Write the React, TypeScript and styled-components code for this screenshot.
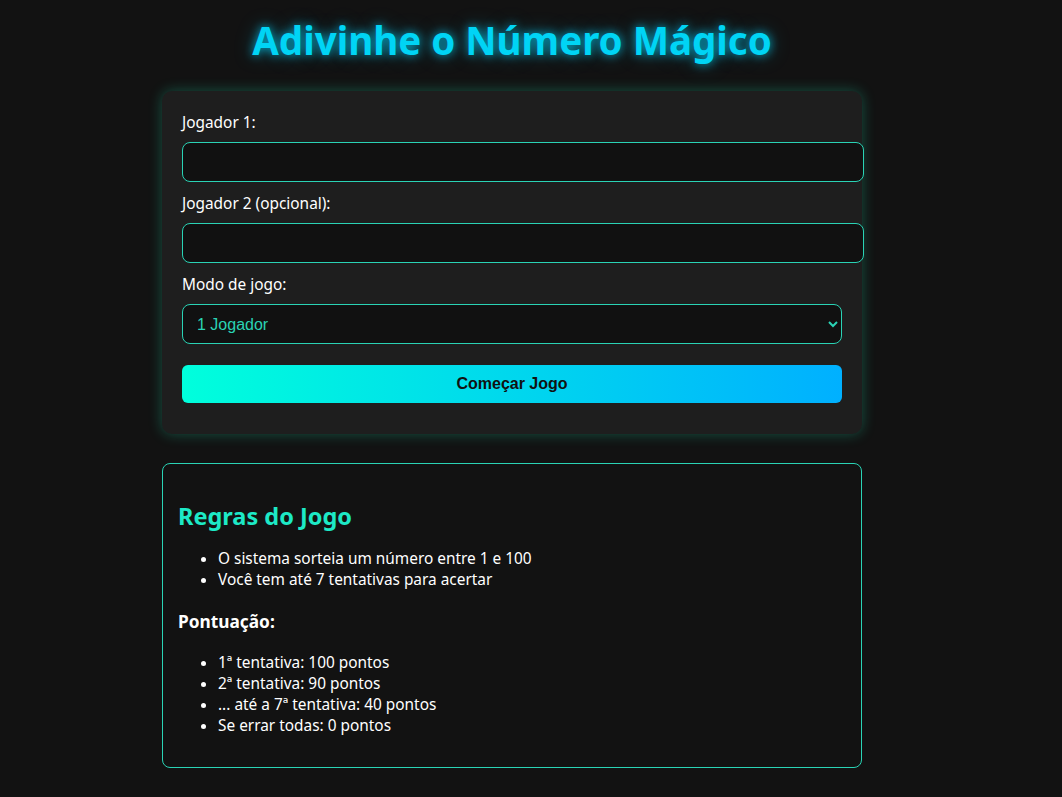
import React from "react";
import styled, { createGlobalStyle } from "styled-components";

const Global = createGlobalStyle`
  html, body {
    margin: 0;
    padding: 0;
    background: #121212;
  }
  body {
    font-family: "Noto Sans", "Open Sans", sans-serif;
    color: #ffffff;
  }
`;

const Page = styled.div`
  padding: 16px 38px 30px 0;
  display: flex;
  flex-direction: column;
  align-items: center;
`;

const Title = styled.h1`
  margin: 0 0 27px;
  font-size: 38.5px;
  line-height: 48px;
  font-weight: 700;
  color: #00d4f5;
  text-shadow: 0 0 10px rgba(0, 212, 255, 0.75), 0 0 20px rgba(0, 212, 255, 0.35);
`;

const Card = styled.div`
  width: 700px;
  box-sizing: border-box;
  padding: 21px 20px 31px;
  background: #1e1e1e;
  border-radius: 10px;
  box-shadow: 0 0 14px rgba(29, 233, 182, 0.3);
`;

const Label = styled.label`
  display: block;
  font-size: 15.4px;
  line-height: 22px;
  margin-bottom: 8px;
`;

const TextInput = styled.input`
  display: block;
  width: 100%;
  padding: 10px;
  height: 18px;
  margin: 0 0 11px;
  background: #111111;
  border: 1px solid #2ad3b5;
  border-radius: 8px;
  color: #2ad3b5;
  font-size: 16px;
  outline: none;
`;

const Select = styled.select`
  display: block;
  width: 100%;
  height: 40px;
  box-sizing: border-box;
  padding: 0 10px;
  margin: 0 0 21px;
  background: #111111;
  border: 1px solid #2ad3b5;
  border-radius: 8px;
  color: #2ad3b5;
  font-family: "Liberation Sans", Arial, sans-serif;
  font-size: 16px;
  outline: none;
`;

const StartButton = styled.button`
  display: block;
  width: 100%;
  height: 38px;
  border: none;
  border-radius: 6px;
  background: linear-gradient(90deg, #00ffdc 0%, #00b0ff 100%);
  color: #111111;
  font-family: "Liberation Sans", Arial, sans-serif;
  font-size: 16px;
  font-weight: 700;
  cursor: pointer;
`;

const Rules = styled.div`
  width: 700px;
  box-sizing: border-box;
  margin-top: 29px;
  padding: 15px;
  border: 1px solid #2ad3b5;
  border-radius: 8px;
  background: #121212;
`;

const RulesTitle = styled.h2`
  margin: 21px 0 16px;
  font-size: 23.5px;
  line-height: 32px;
  font-weight: 700;
  color: #1de9c6;
`;

const SubTitle = styled.h3`
  margin: 20px 0 18px;
  font-size: 17.3px;
  line-height: 24px;
  font-weight: 700;
  color: #ffffff;
`;

const List = styled.ul`
  margin: 0;
  padding-left: 40px;
  font-size: 15.4px;
  line-height: 21px;
`;

const LastList = styled(List)`
  margin-bottom: 16px;
`;

export default function App() {
  return (
    <>
      <Global />
      <Page>
        <Title>Adivinhe o Número Mágico</Title>
        <Card>
          <Label htmlFor="p1">Jogador 1:</Label>
          <TextInput id="p1" type="text" />
          <Label htmlFor="p2">Jogador 2 (opcional):</Label>
          <TextInput id="p2" type="text" />
          <Label htmlFor="mode">Modo de jogo:</Label>
          <Select id="mode" defaultValue="1">
            <option value="1">1 Jogador</option>
            <option value="2">2 Jogadores</option>
          </Select>
          <StartButton>Começar Jogo</StartButton>
        </Card>
        <Rules>
          <RulesTitle>Regras do Jogo</RulesTitle>
          <List>
            <li>O sistema sorteia um número entre 1 e 100</li>
            <li>Você tem até 7 tentativas para acertar</li>
          </List>
          <SubTitle>Pontuação:</SubTitle>
          <LastList>
            <li>1ª tentativa: 100 pontos</li>
            <li>2ª tentativa: 90 pontos</li>
            <li>... até a 7ª tentativa: 40 pontos</li>
            <li>Se errar todas: 0 pontos</li>
          </LastList>
        </Rules>
      </Page>
    </>
  );
}
